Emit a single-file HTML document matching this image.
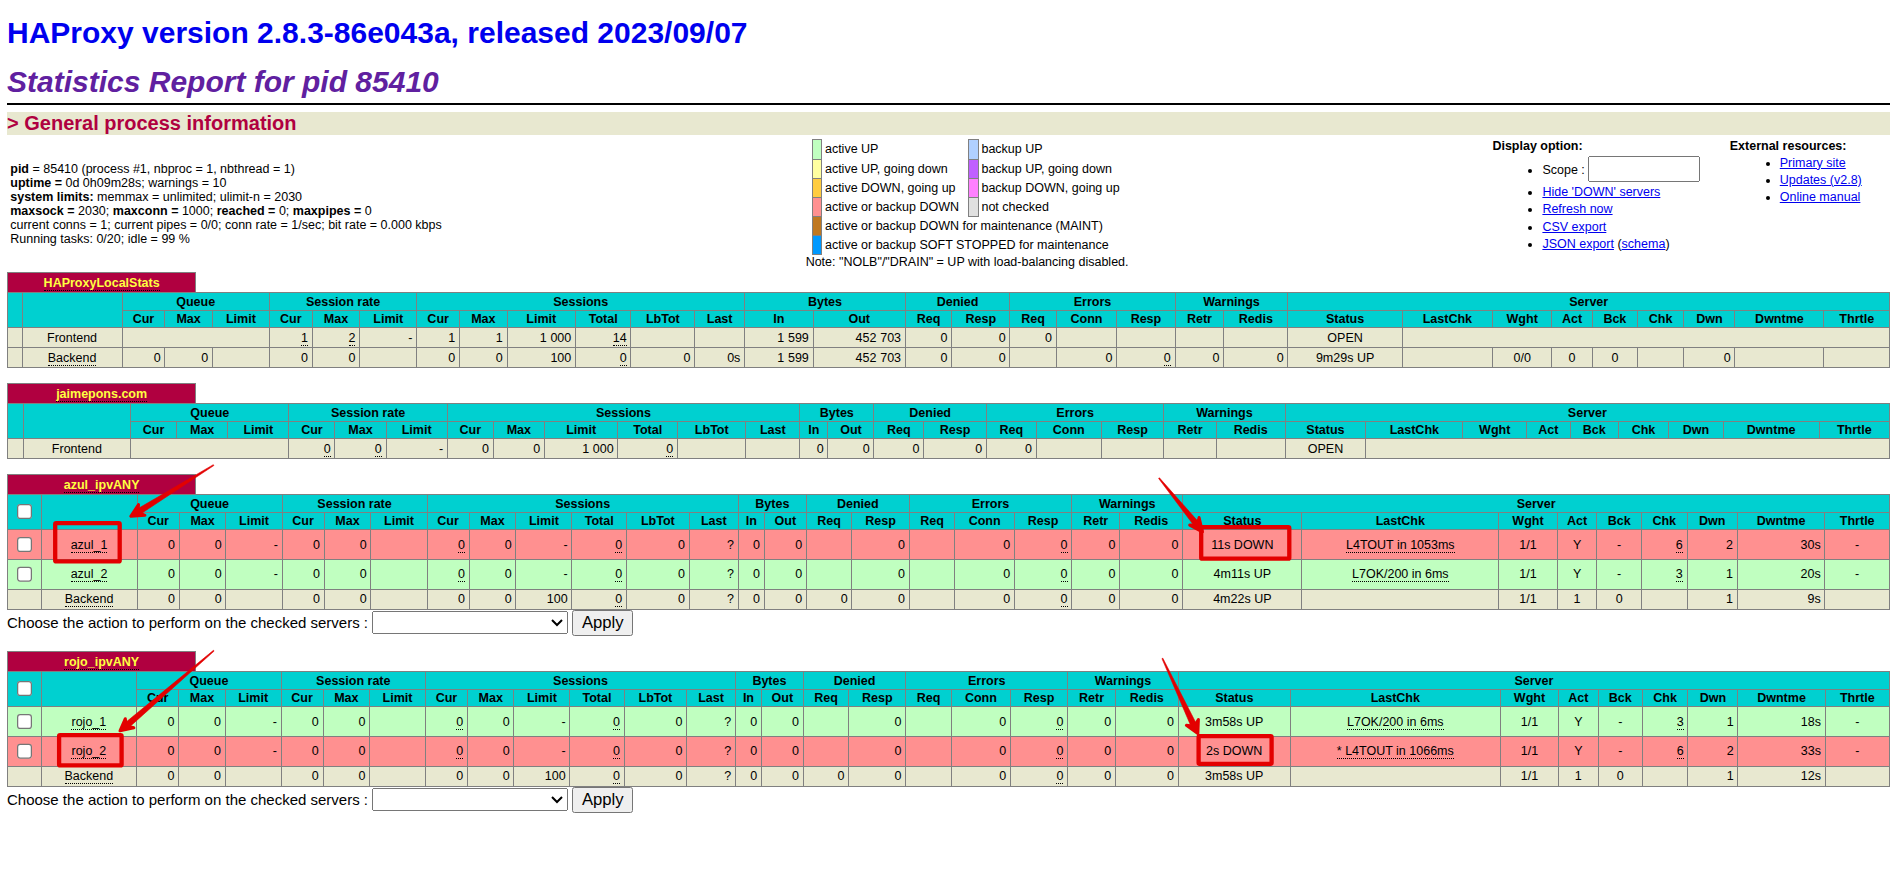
<!DOCTYPE html>
<html><head><meta charset="utf-8"><title>Statistics Report for HAProxy</title>
<style>
html{zoom:1.25}
body{font-family:"Liberation Sans",sans-serif;font-size:12px;font-weight:normal;color:black;background:white;margin:-3.2px 6.4px 0 5.6px;}
th,td{font-size:10px;}
h1{font-size:x-large;margin-bottom:0.5em;}
h1 a{color:#0000ee;text-decoration:none}
h2{font-family:"Liberation Sans",sans-serif;font-size:x-large;font-weight:bold;font-style:italic;color:#6020a0;margin-top:0em;margin-bottom:0em;}
h3{font-family:"Liberation Sans",sans-serif;font-size:16px;font-weight:bold;color:#b00040;background:#e8e8d0;margin-top:0em;margin-bottom:0em;}
li{margin-top:0.25em;margin-right:2em;}
.hr{margin-top:0.25em;border-color:black;border-bottom-style:solid;}
.titre{background:#00D0D0;color:#000000;font-weight:bold;text-align:center;}
.frontend{background:#e8e8d0;}
.backend{background:#e8e8d0;}
.active_down{background:#ff9090;}
.active_going_up{background:#ffcc40;}
.active_going_down{background:#ffffa0;}
.active_up{background:#c0ffc0;}
.active_nolb{background:#0099ff;}
.active_no_check{background:#e0e0e0;}
.backup_going_up{background:#ff80ff;}
.backup_going_down{background:#c060ff;}
.backup_up{background:#b0d0ff;}
.maintain{background:#c07820;}
.rls{letter-spacing:0.2em;margin-right:1px;}
a.px{color:#ffff40;text-decoration:none;}
a.lfsb{color:#000000;text-decoration:none;}
table.tbl{border-collapse:collapse;border-style:none;}
table.tbl td{text-align:right;border-width:1px;border-style:solid;padding:2px 3px;border-color:gray;white-space:nowrap;}
table.tbl td.ac{text-align:center;}
table.tbl th{border-width:1px;border-style:solid;border-color:gray;}
table.tbl th.pxname{background:#b00040;color:#ffff40;font-weight:bold;border-style:solid solid none solid;padding:2px 3px;white-space:nowrap;}
table.tbl th.empty{border-style:none;empty-cells:hide;background:white;}
table.lgd{border-collapse:collapse;border-width:1px;border-style:none none none solid;border-color:black;}
table.lgd td{border-width:1px;border-style:solid;border-color:gray;padding:2px;}
table.lgd td.noborder{border-style:none;padding:2px;white-space:nowrap;}
u{text-decoration:none;border-bottom:1px dotted black;}
a{color:#0000ee}
form{margin:0}
.ann{position:absolute;left:0;top:0;width:1518.4px;height:711.2px;pointer-events:none}
</style></head>
<body>
<h1><a href="#">HAProxy version 2.8.3-86e043a, released 2023/09/07</a></h1>
<h2>Statistics Report for pid 85410</h2>
<hr width="100%" class="hr">
<h3>&gt; General process information</h3>
<table border=0 width="100%"><tr><td align="left" nowrap width="1%">
<p><b>pid</b> = 85410 (process #1, nbproc = 1, nbthread = 1)<br>
<b>uptime = </b> 0d 0h09m28s; warnings = 10<br>
<b>system limits:</b> memmax = unlimited; ulimit-n = 2030<br>
<b>maxsock = </b> 2030; <b>maxconn = </b> 1000; <b>reached = </b> 0; <b>maxpipes = </b> 0<br>
current conns = 1; current pipes = 0/0; conn rate = 1/sec; bit rate = 0.000 kbps<br>
Running tasks: 0/20; idle = 99 %<br>
</td><td align="center" nowrap>
<table class="lgd"><tr>
<td class="active_up">&nbsp;</td><td class="noborder">active UP </td><td class="backup_up">&nbsp;</td><td class="noborder">backup UP </td></tr><tr>
<td class="active_going_down"></td><td class="noborder">active UP, going down </td><td class="backup_going_down"></td><td class="noborder">backup UP, going down </td></tr><tr>
<td class="active_going_up"></td><td class="noborder">active DOWN, going up </td><td class="backup_going_up"></td><td class="noborder">backup DOWN, going up </td></tr><tr>
<td class="active_down"></td><td class="noborder">active or backup DOWN &nbsp;</td><td class="active_no_check"></td><td class="noborder">not checked </td></tr><tr>
<td class="maintain"></td><td class="noborder" colspan="3">active or backup DOWN for maintenance (MAINT) &nbsp;</td></tr><tr>
<td class="active_nolb"></td><td class="noborder" colspan="3">active or backup SOFT STOPPED for maintenance &nbsp;</td></tr></table>
Note: "NOLB"/"DRAIN" = UP with load-balancing disabled.</td>
<td align="left" valign="top" nowrap width="1%"><b>Display option:</b><ul style="margin-top: 0.25em;">
<li><form method="GET">Scope : <input value="" name="scope" size="8" maxlength="31" type="text" style="box-sizing:border-box;width:89.6px"></form>
<li><a href="#">Hide 'DOWN' servers</a>
<li><a href="#">Refresh now</a>
<li><a href="#">CSV export</a>
<li><a href="#">JSON export</a> (<a href="#">schema</a>)
</ul></td><td align="left" valign="top" nowrap width="1%"><b>External resources:</b><ul style="margin-top: 0.25em;">
<li><a href="#">Primary site</a><br>
<li><a href="#">Updates (v2.8)</a><br>
<li><a href="#">Online manual</a><br>
</ul></td></tr></table>
<!--TABLES-->
<table class="tbl" width="100%"><tr class="titre"><th class="pxname" width="10%"><a class="px" href="#"><u class="pxu">HAProxyLocalStats</u></a></th><th class="empty" width="90%"></th></tr></table>
<table class="tbl" width="100%"><tr class="titre"><th rowspan=2></th><th rowspan=2></th><th colspan=3>Queue</th><th colspan=3>Session rate</th><th colspan=6>Sessions</th><th colspan=2>Bytes</th><th colspan=2>Denied</th><th colspan=3>Errors</th><th colspan=2>Warnings</th><th colspan=9>Server</th></tr>
<tr class="titre"><th>Cur</th><th>Max</th><th>Limit</th><th>Cur</th><th>Max</th><th>Limit</th><th>Cur</th><th>Max</th><th>Limit</th><th>Total</th><th>LbTot</th><th>Last</th><th>In</th><th>Out</th><th>Req</th><th>Resp</th><th>Req</th><th>Conn</th><th>Resp</th><th>Retr</th><th>Redis</th><th>Status</th><th>LastChk</th><th>Wght</th><th>Act</th><th>Bck</th><th>Chk</th><th>Dwn</th><th>Dwntme</th><th>Thrtle</th></tr>
<tr class="frontend"><td></td><td class="ac"><a class="lfsb" href="#">Frontend</a></td><td colspan=3></td><td><u>1</u></td><td><u>2</u></td><td>-</td><td>1</td><td>1</td><td><span class="rls">1</span>000</td><td><u>14</u></td><td></td><td></td><td><span class="rls">1</span>599</td><td>45<span class="rls">2</span>703</td><td>0</td><td>0</td><td>0</td><td></td><td></td><td></td><td></td><td class="ac">OPEN</td><td colspan=8></td></tr>
<tr class="backend"><td></td><td class="ac"><a class="lfsb" href="#"><u>Backend</u></a></td><td>0</td><td>0</td><td></td><td>0</td><td>0</td><td></td><td>0</td><td>0</td><td>100</td><td><u>0</u></td><td>0</td><td>0s</td><td><span class="rls">1</span>599</td><td>45<span class="rls">2</span>703</td><td>0</td><td>0</td><td></td><td>0</td><td><u>0</u></td><td>0</td><td>0</td><td class="ac">9m29s UP</td><td class="ac"></td><td class="ac">0/0</td><td class="ac">0</td><td class="ac">0</td><td class="ac"></td><td>0</td><td></td><td></td></tr>
</table>
<p>
<table class="tbl" width="100%"><tr class="titre"><th class="pxname" width="10%"><a class="px" href="#"><u class="pxu">jaimepons.com</u></a></th><th class="empty" width="90%"></th></tr></table>
<table class="tbl" width="100%"><tr class="titre"><th rowspan=2></th><th rowspan=2></th><th colspan=3>Queue</th><th colspan=3>Session rate</th><th colspan=6>Sessions</th><th colspan=2>Bytes</th><th colspan=2>Denied</th><th colspan=3>Errors</th><th colspan=2>Warnings</th><th colspan=9>Server</th></tr>
<tr class="titre"><th>Cur</th><th>Max</th><th>Limit</th><th>Cur</th><th>Max</th><th>Limit</th><th>Cur</th><th>Max</th><th>Limit</th><th>Total</th><th>LbTot</th><th>Last</th><th>In</th><th>Out</th><th>Req</th><th>Resp</th><th>Req</th><th>Conn</th><th>Resp</th><th>Retr</th><th>Redis</th><th>Status</th><th>LastChk</th><th>Wght</th><th>Act</th><th>Bck</th><th>Chk</th><th>Dwn</th><th>Dwntme</th><th>Thrtle</th></tr>
<tr class="frontend"><td></td><td class="ac"><a class="lfsb" href="#">Frontend</a></td><td colspan=3></td><td><u>0</u></td><td><u>0</u></td><td>-</td><td>0</td><td>0</td><td><span class="rls">1</span>000</td><td><u>0</u></td><td></td><td></td><td>0</td><td>0</td><td>0</td><td>0</td><td>0</td><td></td><td></td><td></td><td></td><td class="ac">OPEN</td><td colspan=8></td></tr>
</table>
<p>
<table class="tbl" width="100%"><tr class="titre"><th class="pxname" width="10%"><a class="px" href="#"><u class="pxu">azul_ipvANY</u></a></th><th class="empty" width="90%"></th></tr></table>
<table class="tbl" width="100%"><tr class="titre"><th rowspan=2 width=1><input type="checkbox"></th><th rowspan=2></th><th colspan=3>Queue</th><th colspan=3>Session rate</th><th colspan=6>Sessions</th><th colspan=2>Bytes</th><th colspan=2>Denied</th><th colspan=3>Errors</th><th colspan=2>Warnings</th><th colspan=9>Server</th></tr>
<tr class="titre"><th>Cur</th><th>Max</th><th>Limit</th><th>Cur</th><th>Max</th><th>Limit</th><th>Cur</th><th>Max</th><th>Limit</th><th>Total</th><th>LbTot</th><th>Last</th><th>In</th><th>Out</th><th>Req</th><th>Resp</th><th>Req</th><th>Conn</th><th>Resp</th><th>Retr</th><th>Redis</th><th>Status</th><th>LastChk</th><th>Wght</th><th>Act</th><th>Bck</th><th>Chk</th><th>Dwn</th><th>Dwntme</th><th>Thrtle</th></tr>
<tr class="active_down"><td><input type="checkbox"></td><td class="ac"><a class="lfsb" href="#"><u>azul_1</u></a></td><td>0</td><td>0</td><td>-</td><td>0</td><td>0</td><td></td><td><u>0</u></td><td>0</td><td>-</td><td><u>0</u></td><td>0</td><td>?</td><td>0</td><td>0</td><td></td><td>0</td><td></td><td>0</td><td><u>0</u></td><td>0</td><td>0</td><td class="ac">11s DOWN</td><td class="ac"><u>L4TOUT in 1053ms</u></td><td class="ac">1/1</td><td class="ac">Y</td><td class="ac">-</td><td><u>6</u></td><td>2</td><td>30s</td><td class="ac">-</td></tr>
<tr class="active_up"><td><input type="checkbox"></td><td class="ac"><a class="lfsb" href="#"><u>azul_2</u></a></td><td>0</td><td>0</td><td>-</td><td>0</td><td>0</td><td></td><td><u>0</u></td><td>0</td><td>-</td><td><u>0</u></td><td>0</td><td>?</td><td>0</td><td>0</td><td></td><td>0</td><td></td><td>0</td><td><u>0</u></td><td>0</td><td>0</td><td class="ac">4m11s UP</td><td class="ac"><u>L7OK/200 in 6ms</u></td><td class="ac">1/1</td><td class="ac">Y</td><td class="ac">-</td><td><u>3</u></td><td>1</td><td>20s</td><td class="ac">-</td></tr>
<tr class="backend"><td></td><td class="ac"><a class="lfsb" href="#"><u>Backend</u></a></td><td>0</td><td>0</td><td></td><td>0</td><td>0</td><td></td><td>0</td><td>0</td><td>100</td><td><u>0</u></td><td>0</td><td>?</td><td>0</td><td>0</td><td>0</td><td>0</td><td></td><td>0</td><td><u>0</u></td><td>0</td><td>0</td><td class="ac">4m22s UP</td><td class="ac"></td><td class="ac">1/1</td><td class="ac">1</td><td class="ac">0</td><td class="ac"></td><td>1</td><td>9s</td><td></td></tr>
</table>
Choose the action to perform on the checked servers : <select name="action" style="width:156.8px"><option value=""></option></select>&nbsp;<input type="submit" value="Apply">
<p>
<table class="tbl" width="100%"><tr class="titre"><th class="pxname" width="10%"><a class="px" href="#"><u class="pxu">rojo_ipvANY</u></a></th><th class="empty" width="90%"></th></tr></table>
<table class="tbl" width="100%"><tr class="titre"><th rowspan=2 width=1><input type="checkbox"></th><th rowspan=2></th><th colspan=3>Queue</th><th colspan=3>Session rate</th><th colspan=6>Sessions</th><th colspan=2>Bytes</th><th colspan=2>Denied</th><th colspan=3>Errors</th><th colspan=2>Warnings</th><th colspan=9>Server</th></tr>
<tr class="titre"><th>Cur</th><th>Max</th><th>Limit</th><th>Cur</th><th>Max</th><th>Limit</th><th>Cur</th><th>Max</th><th>Limit</th><th>Total</th><th>LbTot</th><th>Last</th><th>In</th><th>Out</th><th>Req</th><th>Resp</th><th>Req</th><th>Conn</th><th>Resp</th><th>Retr</th><th>Redis</th><th>Status</th><th>LastChk</th><th>Wght</th><th>Act</th><th>Bck</th><th>Chk</th><th>Dwn</th><th>Dwntme</th><th>Thrtle</th></tr>
<tr class="active_up"><td><input type="checkbox"></td><td class="ac"><a class="lfsb" href="#"><u>rojo_1</u></a></td><td>0</td><td>0</td><td>-</td><td>0</td><td>0</td><td></td><td><u>0</u></td><td>0</td><td>-</td><td><u>0</u></td><td>0</td><td>?</td><td>0</td><td>0</td><td></td><td>0</td><td></td><td>0</td><td><u>0</u></td><td>0</td><td>0</td><td class="ac">3m58s UP</td><td class="ac"><u>L7OK/200 in 6ms</u></td><td class="ac">1/1</td><td class="ac">Y</td><td class="ac">-</td><td><u>3</u></td><td>1</td><td>18s</td><td class="ac">-</td></tr>
<tr class="active_down"><td><input type="checkbox"></td><td class="ac"><a class="lfsb" href="#"><u>rojo_2</u></a></td><td>0</td><td>0</td><td>-</td><td>0</td><td>0</td><td></td><td><u>0</u></td><td>0</td><td>-</td><td><u>0</u></td><td>0</td><td>?</td><td>0</td><td>0</td><td></td><td>0</td><td></td><td>0</td><td><u>0</u></td><td>0</td><td>0</td><td class="ac">2s DOWN</td><td class="ac"><u>* L4TOUT in 1066ms</u></td><td class="ac">1/1</td><td class="ac">Y</td><td class="ac">-</td><td><u>6</u></td><td>2</td><td>33s</td><td class="ac">-</td></tr>
<tr class="backend"><td></td><td class="ac"><a class="lfsb" href="#"><u>Backend</u></a></td><td>0</td><td>0</td><td></td><td>0</td><td>0</td><td></td><td>0</td><td>0</td><td>100</td><td><u>0</u></td><td>0</td><td>?</td><td>0</td><td>0</td><td>0</td><td>0</td><td></td><td>0</td><td><u>0</u></td><td>0</td><td>0</td><td class="ac">3m58s UP</td><td class="ac"></td><td class="ac">1/1</td><td class="ac">1</td><td class="ac">0</td><td class="ac"></td><td>1</td><td>12s</td><td></td></tr>
</table>
Choose the action to perform on the checked servers : <select name="action" style="width:156.8px"><option value=""></option></select>&nbsp;<input type="submit" value="Apply">
<p>
<!--/TABLES-->
<!--ANN-->
<svg class="ann" viewBox="0 0 1898 889">
<rect x="55.2" y="523.2" width="64.5" height="38.2" rx="1" fill="none" stroke="#e30000" stroke-width="4.3"/>
<rect x="1201.2" y="527.2" width="88.1" height="31.5" rx="1" fill="none" stroke="#e30000" stroke-width="4.3"/>
<rect x="59.1" y="735.1" width="62.5" height="30.3" rx="1" fill="none" stroke="#e30000" stroke-width="4.3"/>
<rect x="1198.6" y="736.2" width="73.0" height="27.6" rx="1" fill="none" stroke="#e30000" stroke-width="4.3"/>
<polygon points="213.34,464.67 136.34,509.57 139.49,514.68 213.86,465.53" fill="#e30000" stroke="#e30000" stroke-width="0.6" stroke-linejoin="round"/>
<polygon points="138.51,504.60 130.80,516.25 144.94,515.26 137.92,512.12" fill="#e30000" stroke="#e30000" stroke-width="3.0" stroke-linejoin="round"/>
<polygon points="1158.61,478.41 1194.86,526.83 1199.53,523.05 1159.39,477.79" fill="#e30000" stroke="#e30000" stroke-width="0.6" stroke-linejoin="round"/>
<polygon points="1199.10,517.54 1202.48,531.81 1189.70,525.05 1197.19,524.94" fill="#e30000" stroke="#e30000" stroke-width="3.0" stroke-linejoin="round"/>
<polygon points="213.48,650.32 124.26,723.57 128.16,728.13 214.12,651.08" fill="#e30000" stroke="#e30000" stroke-width="0.6" stroke-linejoin="round"/>
<polygon points="125.32,718.68 119.98,730.77 133.85,727.80 126.21,725.85" fill="#e30000" stroke="#e30000" stroke-width="3.0" stroke-linejoin="round"/>
<polygon points="1161.95,658.61 1191.59,727.63 1197.02,725.08 1162.85,658.19" fill="#e30000" stroke="#e30000" stroke-width="0.6" stroke-linejoin="round"/>
<polygon points="1198.41,719.47 1197.85,733.65 1186.39,725.36 1194.31,726.36" fill="#e30000" stroke="#e30000" stroke-width="3.0" stroke-linejoin="round"/>
</svg>
<!--/ANN-->
</body></html>
